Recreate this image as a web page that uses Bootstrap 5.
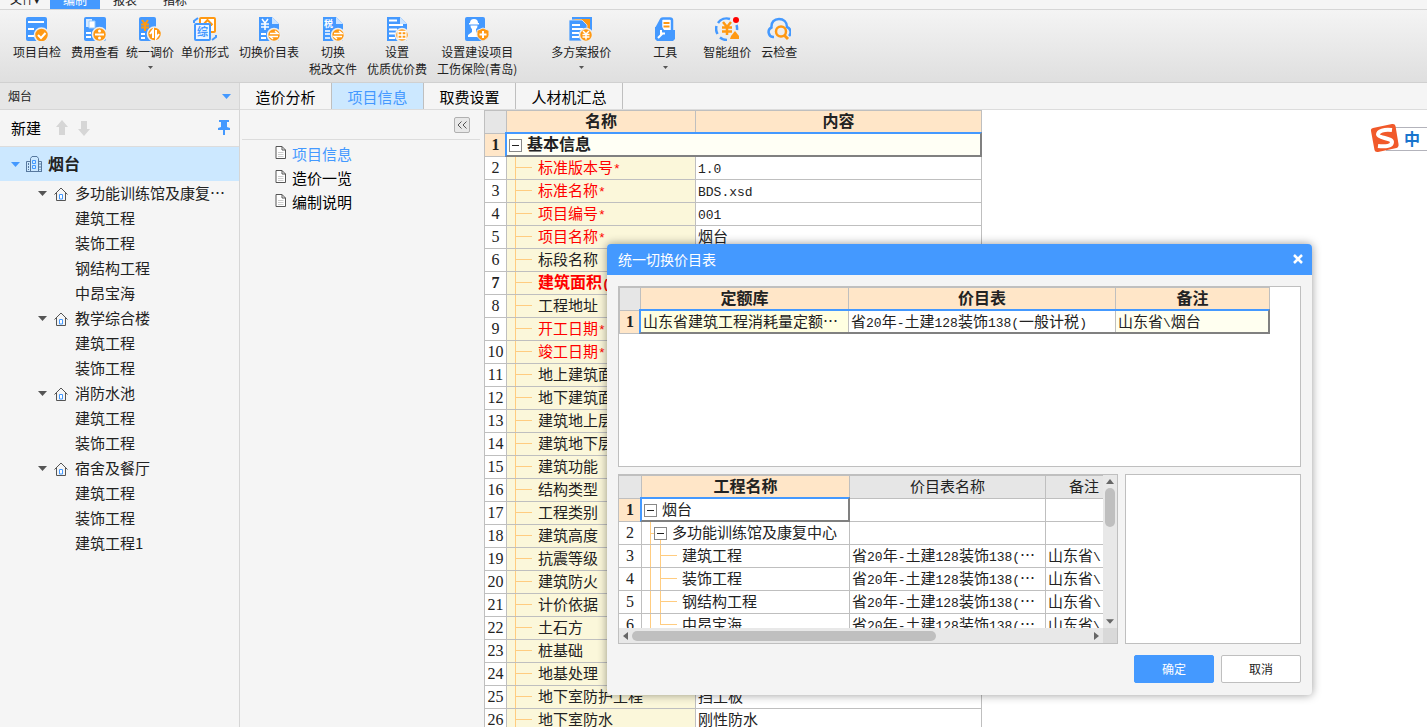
<!DOCTYPE html>
<html lang="zh-CN">
<head>
<meta charset="utf-8">
<meta name="viewport" content="width=device-width, initial-scale=1">
<title>造价编制</title>
<link href="https://cdn.jsdelivr.net/npm/bootstrap@5.3.0/dist/css/bootstrap.min.css" rel="stylesheet">
<style>
:root{--blue:#4499ff;--line:#bfbfbf;--soft:#dcdcdc;--peach:#ffe6c8;--cream:#fbf7da;--twig:#ffcc80;--orange:#ff9913}
body{font-family:"Noto Sans CJK SC",sans-serif;font-size:15px;line-height:20px;color:#222;background:#fff}
a{color:inherit;text-decoration:none}
svg{display:block;flex:none}
button{color:inherit}
.lt{font-family:"Liberation Mono",monospace;font-size:13px;line-height:1}
.menu-row{height:10px;background:#f5f5f5;border-bottom:1px solid #d6d6d6;font-size:12px;overflow:hidden}
.menu-row a{width:50px;text-align:center;line-height:18px;flex:none}
.menu-row a.active{background:var(--blue);color:#fff}
.ribbon{height:73px;padding:7px 13px 0;gap:10px;background:linear-gradient(#f4f4f4,#dfdfdf);border-bottom:1px solid #d0d0d0;font-size:12px}
.tight{gap:7px}
.tool{border:0;background:none;padding:0;line-height:17px;display:flex;flex-direction:column;align-items:center;white-space:nowrap}
.tool svg.ico{width:24px;height:24px;margin-bottom:2px}
.tool svg.dn{margin-top:6px;color:#555}
.side{width:240px;background:#f5f5f5;border-right:1px solid #d6d6d6}
.project{height:27px;background:#e6e6e6;border-bottom:1px solid #d6d6d6}
.project select{width:100%;height:26px;border:0;background:none;appearance:none;padding:0 8px;font-size:12px;color:#222}
.project svg{position:absolute;right:8px;top:11px}
.side-bar{height:37px;border-bottom:1px solid var(--soft);padding:0 9px 0 11px;gap:10px;color:#000}
.side-bar a{margin-right:5px}
.side ul,.docs ul{list-style:none;margin:0;padding:0}
.root-node{height:34px;gap:6px;background:#cce8ff;padding-left:11px;font-size:16px;font-weight:bold}
.root-node span{padding-bottom:3px}
.branch,.leafs li{height:25px;white-space:nowrap}
.branch{padding-left:38px;gap:7px}
.branch span{padding-bottom:2px}
.leafs li{padding-left:75px;line-height:23px}
.tabs{height:27px;background:#f5f5f5;border-bottom:1px solid var(--soft)}
.tabs a{width:92px;text-align:center;line-height:28px;border-right:1px solid var(--line);color:#000}
.tabs a.wide{width:107px}
.tabs a.active{background:#cce8ff;color:var(--blue)}
.docs{width:244px;background:#f5f5f5}
.docs-top{height:30px;margin:0 4px 0 2px;border-bottom:1px solid var(--soft);padding-right:10px}
.docs-top button{width:16px;height:16px;padding:0;border:1px solid #b0b0b0;border-radius:2px;background:#e8e8e8}
.docs ul{padding-top:2px}
.docs li a{height:24px;gap:6px;padding-left:35px;color:#000}
.docs li svg{margin-bottom:3px}
.docs li a.active{color:var(--blue)}
.grid{border-collapse:separate;border-spacing:0;table-layout:fixed;border-left:1px solid var(--line);border-top:1px solid var(--line)}
.grid th,.grid td{height:23px;padding:0 2px;border:0 solid var(--line);border-width:0 1px 1px 0;line-height:19px;vertical-align:top;white-space:nowrap;overflow:hidden;font-weight:normal;background-color:#fff}
.grid thead th{background-color:var(--peach);font-weight:bold;font-size:16px;text-align:center}
.grid thead th.off{background-color:#e6e6e6;font-weight:normal;font-size:15px}
.grid tbody th{text-align:center;padding:0;font-family:"Liberation Serif",serif;font-size:16px;line-height:22px}
.grid tbody th.on{background-color:var(--peach);font-weight:bold}
.info{width:498px}
.info .c1{width:22px}.info .c2{width:189px}
.lib{width:651px}
.lib .c1{width:21px}.lib .c2{width:208px}.lib .c3{width:267px}
.proj{width:504px}
.proj .c1{width:23px}.proj .c2{width:208px}.proj .c3{width:196px}
.info tbody td:nth-child(2){padding-left:31px;background-color:var(--cream);background-image:linear-gradient(var(--twig),var(--twig)),linear-gradient(var(--twig),var(--twig));background-size:1px 100%,17px 1px;background-position:8px 0,8px 10px;background-repeat:no-repeat}
.info tbody td.title{padding-left:2px;background:#fffff5;font-weight:bold;font-size:16px}
.info .need td:nth-child(2){color:#f00}
.info .strong th,.info .strong td{font-weight:bold}
.info .strong td{font-size:16px}
.lib td.pick{background-color:#ffffe1}
.lib td.note{background-color:#fffff0}
.grid td.sel{position:relative;overflow:visible}
.sel::after{content:"";position:absolute;inset:-2px -1px -1px -2px;border:2px solid #808080;border-top-color:var(--blue);border-left-color:var(--blue);pointer-events:none}
.lib .sel::after{right:-422px}
.fold{display:inline-block;vertical-align:-2px;width:13px;height:13px;margin-right:5px;border:1px solid #888;background:linear-gradient(#222,#222) center/7px 1px no-repeat #fff;line-height:13px}
.proj td.n1{padding-left:12px}
.proj td.n2{padding-left:40px}
.proj .twig{background-image:linear-gradient(var(--twig),var(--twig)),linear-gradient(var(--twig),var(--twig)),linear-gradient(var(--twig),var(--twig));background-repeat:no-repeat}
.proj td.n1{background-size:1px 100%,4px 1px,1px 6px;background-position:8px 0,8px 11px,18px 100%}
.proj td.n2{background-size:1px 100%,1px 100%,17px 1px;background-position:8px 0,18px 0,18px 10px}
.proj .last td.n2{background-size:1px 100%,1px 10px,17px 1px}
.dialog-win{position:absolute;left:607px;top:244px;width:705px;background:#f4f4f4;border-radius:4px;box-shadow:0 0 10px rgba(0,0,0,.4);overflow:hidden}
.dialog-bar{height:31px;background:var(--blue);color:#fff;padding:0 8px 1px 11px;font-size:14px}
.dialog-bar button{border:0;background:none;padding:0;width:12px;height:12px}
.dialog-main{padding:11px 11px 12px}
.pane{background:#fff;border:1px solid var(--line)}
.pane-top{height:181px}
.panes{height:170px;margin-top:7px;gap:7px}
.pane-left{width:500px;display:grid;grid-template:minmax(0,1fr) 15px/minmax(0,1fr) 14px}
.pane-left .grid{border-left:0}
.clip{overflow:hidden}
.vbar,.hbar{background:#e8e8e8}
.vbar i{width:10px;height:39px;border-radius:5px;background:#bfbfbf}
.hbar i{width:304px;height:10px;border-radius:5px;background:#bfbfbf}
.corner{background:#d9d9d9}
.actions{gap:7px;margin-top:11px}
.actions .btn{width:80px;height:28px;padding:0;font-size:12px;border-radius:2px;border:1px solid var(--line);background:#fff;color:#222}
.actions .btn.ok{background:var(--blue);border-color:var(--blue);color:#fff}
.ime{position:absolute;right:0;top:123px;width:57px;height:30px}
.ime-bar{height:24px;width:41px;border:1px solid #b3b3bb;border-right:0;background:#fff;color:#1874cd;font-weight:bold;font-size:16px;line-height:21px;padding-left:17px}
.ime svg{position:absolute;left:0;top:0}
</style>
</head>
<body class="vh-100 overflow-hidden position-relative d-flex flex-column">
<svg width="0" height="0" class="position-absolute">
<defs>
<symbol id="sheet" viewBox="0 0 24 24"><path fill="#4499ff" d="M2 0h13l7 7v17H2z"/><path fill="#cce4ff" d="M15 0l7 7h-7z"/></symbol>
<symbol id="caret" viewBox="0 0 9 5"><path d="M0 0h9L4.500 5z" fill="currentColor"/></symbol>
<symbol id="house" viewBox="0 0 14 14"><path d="M.5 7.500L7 1l6.500 6.500M2.500 6v7.500h9V6" fill="none" stroke="#555"/><path d="M5.500 7.500h3V12h-3z" fill="#fff" stroke="#4499ff"/></symbol>
<symbol id="doc" viewBox="0 0 11 13"><path d="M1 .5h6l3.500 3.500v8.500H1z" fill="#fff" stroke="#555"/><path d="M7 .5V4h3.500" fill="none" stroke="#555"/><path d="M3 6.500h5.500M3 8.500h5.500M3 10.500h5.500" stroke="#ccc"/></symbol>
</defs>
</svg>

<nav class="menu-row d-flex align-items-end flex-shrink-0">
<a href="#">文件<span class="small">▾</span></a><a href="#" class="active">编制</a><a href="#">报表</a><a href="#">指标</a>
</nav>

<div class="ribbon d-flex flex-shrink-0 align-items-start">
<button class="tool"><svg class="ico" viewBox="0 0 24 24"><rect x="1" width="21" height="24" rx="2" fill="#4499ff"/><path d="M3 5h16M3 12h6M3 19h6" stroke="#fff" stroke-width="2"/><circle cx="16.500" cy="18" r="7" fill="#ff9913" stroke="#eee" stroke-width="1.500"/><path d="M13 18l3 3 4.500-5" fill="none" stroke="#fff" stroke-width="2"/></svg>项目自检</button>
<div class="tight d-flex align-items-start">
<button class="tool"><svg class="ico" viewBox="0 0 24 24"><rect x="1" width="22" height="24" rx="2" fill="#4499ff"/><path d="M3 2h6v8H3z" fill="#d8eaff"/><path d="M6 4h6v7H6z" fill="#fff" stroke="#9cf"/><path d="M3 16h5M3 20h5" stroke="#fff" stroke-width="2"/><circle cx="16.500" cy="17.500" r="7" fill="#ff9913" stroke="#eee" stroke-width="1.500"/><path d="M12 17.500h9" stroke="#fff" stroke-width="2"/><circle cx="16.500" cy="14" r="1.500" fill="#fff"/><circle cx="16.500" cy="21" r="1.500" fill="#fff"/></svg>费用查看</button>
<button class="tool"><svg class="ico" viewBox="0 0 24 24"><rect x="1" width="17" height="24" rx="2" fill="#4499ff"/><path d="M4 3l3 4 3-4M3 7.500h8M3 10.500h8M7 7v7" fill="none" stroke="#ff9913" stroke-width="2"/><path d="M3 17h4M3 21h4" stroke="#fff" stroke-width="2"/><circle cx="16.500" cy="17" r="7" fill="#ff9913" stroke="#eee" stroke-width="1.500"/><path d="M15 21v-8l-3 4M18 13v8l3-4" fill="none" stroke="#fff" stroke-width="2"/></svg>统一调价<svg class="dn" width="5" height="3"><use href="#caret"/></svg></button>
<button class="tool"><svg class="ico" viewBox="0 0 24 24"><rect x="7" y="1" width="15" height="14" rx="1" fill="#fff" stroke="#ff9913" stroke-width="2"/><path d="M10 8l4.500-5 5 5M12 8h7" fill="none" stroke="#ff9913" stroke-width="2"/><rect x="2" y="7" width="15" height="16" rx="1" fill="#eef6ff" stroke="#4499ff" stroke-width="2"/><text x="4" y="19" font-size="11" font-weight="bold" fill="#4499ff">综</text><path d="M1 6V4l4-3M23 18v2l-4 3" fill="none" stroke="#4499ff" stroke-width="2"/></svg>单价形式</button>
</div>
<button class="tool"><svg class="ico" viewBox="0 0 24 24"><use href="#sheet"/><path d="M5 2l3 4 3-4M4 7h8M4 10h8M8 6v7" fill="none" stroke="#fff" stroke-width="1.500"/><path d="M4 17h5M4 21h5" stroke="#fff" stroke-width="2"/><circle cx="17" cy="18" r="6.500" fill="#ff9913" stroke="#eee" stroke-width="1.500"/><path d="M13 16.500h8l-3-2.500M21 19.500h-8l3 2.500" fill="none" stroke="#fff" stroke-width="1.500"/></svg>切换价目表</button>
<button class="tool"><svg class="ico" viewBox="0 0 24 24"><use href="#sheet"/><text x="3" y="10" font-size="9" font-weight="bold" fill="#fff">税</text><path d="M4 14h5M4 17h5M4 21h5" stroke="#fff" stroke-width="1.500"/><circle cx="17" cy="18" r="6.500" fill="#ff9913" stroke="#eee" stroke-width="1.500"/><path d="M13 16.500h8l-3-2.500M21 19.500h-8l3 2.500" fill="none" stroke="#fff" stroke-width="1.500"/></svg>切换<span>税改文件</span></button>
<button class="tool"><svg class="ico" viewBox="0 0 24 24"><use href="#sheet"/><path d="M4 3.500h8M4 8h14M4 12.500h8M4 16.500h6M4 21h6" stroke="#fff" stroke-width="2"/><circle cx="17" cy="18" r="6.500" fill="#ff9913" stroke="#eee" stroke-width="1.500"/><path d="M17 14v8M13 18h8M13 14.500h8v7h-8z" fill="none" stroke="#fff" stroke-width="1.300"/></svg>设置<span>优质优价费</span></button>
<button class="tool"><svg class="ico" viewBox="0 0 24 24"><rect x="0" width="20" height="24" rx="2" fill="#4499ff"/><path d="M5 6a4 4 0 018 0h1v1.500H4V6zM5.500 8.500h7a3.500 4 0 01-7 0zM7 12h4v3l4 3v2H3v-2l4-3z" fill="#fff"/><path d="M18 11l6 2.500v4c0 3-3 5.500-6 6.500-3-1-6-3.500-6-6.500v-4z" fill="#ff9913" stroke="#eee"/><path d="M18 14v7M14.500 17.500h7" stroke="#fff" stroke-width="2"/></svg>设置建设项目<span>工伤保险(青岛)</span></button>
<button class="tool ms-4"><svg class="ico" viewBox="0 0 24 24"><path fill="#4499ff" d="M3 0h20v20H3z"/><path fill="#ff9913" d="M5 2h16v15z"/><path fill="#4499ff" stroke="#eee" stroke-width=".8" d="M0 3h13l5 5v16H0z"/><path d="M3 8h8M3 12h11M3 16h7M3 20h7" stroke="#fff" stroke-width="2"/><circle cx="17" cy="18" r="6.500" fill="#ff9913" stroke="#eee" stroke-width="1.500"/><path d="M14 14l3 3 3-3M13.500 17.500h7M13.500 20h7M17 17v5.500" fill="none" stroke="#fff" stroke-width="1.500"/></svg>多方案报价<svg class="dn" width="5" height="3"><use href="#caret"/></svg></button>
<button class="tool ms-4 ps-2"><svg class="ico" viewBox="0 0 24 24"><path d="M2 11L7 2h5v10H2z" fill="#4499ff"/><rect x="8" y="1.500" width="11" height="16" rx="2" fill="#fff" stroke="#4499ff" stroke-width="2.500"/><path d="M10.500 6h6M10.500 9.500h6" stroke="#ff9913" stroke-width="2"/><path d="M2 10h7l2 3h11v9l-2 2H4l-2-2z" fill="#4499ff"/><path d="M5 21l5-5M8 13v3.500h4" fill="none" stroke="#fff" stroke-width="2"/></svg>工具<svg class="dn" width="5" height="3"><use href="#caret"/></svg></button>
<button class="tool ms-3"><svg class="ico" viewBox="0 0 24 24"><path d="M15 2A10.500 10.500 0 003 6M1.500 9a10.500 10.500 0 001 8M5 20.500a10.500 10.500 0 007 2.500M21.500 8a10.500 10.500 0 01.500 5" fill="none" stroke="#4499ff" stroke-width="2.500"/><path d="M8 5l4 5 4-5M7 10.500h10M7 14.500h10M12 10v8" fill="none" stroke="#ff9913" stroke-width="2.500"/><path d="M15 22l1-3 4-5 4 5v3z" fill="#ff9913"/><circle cx="21" cy="3" r="3" fill="red"/></svg>智能组价</button>
<button class="tool"><svg class="ico" viewBox="0 0 24 24"><path d="M7 20H6a5 5 0 01-1.500-9.500C4 5 7.500 2 12 2s8 3 8 8a5.500 5.500 0 012 9" fill="none" stroke="#4499ff" stroke-width="2.500"/><circle cx="14" cy="14.500" r="5" fill="none" stroke="#ff9913" stroke-width="2.500"/><path d="M17 18l4 4" stroke="#ff9913" stroke-width="3"/></svg>云检查</button>
</div>

<div class="d-flex flex-grow-1 overflow-hidden">
<aside class="side flex-shrink-0">
<div class="project position-relative"><select aria-label="工程"><option>烟台</option></select><svg width="9" height="5" color="#4499ff"><use href="#caret"/></svg></div>
<div class="side-bar d-flex align-items-center">
<a href="#">新建</a>
<svg width="12" height="16" viewBox="0 0 12 16"><path d="M6 0l6 7H9v8H3V7H0z" fill="#d6d6d6"/></svg>
<svg width="12" height="16" viewBox="0 0 12 16"><path d="M6 16L0 9h3V1h6v8h3z" fill="#d6d6d6"/></svg>
<svg class="ms-auto" width="12" height="19" viewBox="0 0 12 19"><path d="M1 1h10v2H9v5l3 1v2H7v5H5v-5H0V9l3-1V3H1z" fill="#4499ff"/></svg>
</div>
<ul>
<li><div class="root-node d-flex align-items-center"><svg width="9" height="5" color="#4499ff"><use href="#caret"/></svg><svg width="16" height="16" viewBox="0 0 16 16"><path d="M4.500 15V2.500L6 .5h5l1.500 2V15M.5 15V5.500h4M15.500 15V5.500h-3M0 15.500h16" fill="none" stroke="#57789e"/><path d="M6.500 4.500h3v3h-3zM6.500 9.500h3v3h-3z" fill="none" stroke="#4499ff"/><path d="M2.500 7v7M14 7v7" stroke="#57789e" stroke-dasharray="2 1"/></svg><span>烟台</span></div>
<ul>
<li><div class="branch d-flex align-items-center"><svg width="9" height="5" color="#555"><use href="#caret"/></svg><svg width="14" height="14"><use href="#house"/></svg><span>多功能训练馆及康复…</span></div>
<ul class="leafs"><li>建筑工程</li><li>装饰工程</li><li>钢结构工程</li><li>中昂宝海</li></ul></li>
<li><div class="branch d-flex align-items-center"><svg width="9" height="5" color="#555"><use href="#caret"/></svg><svg width="14" height="14"><use href="#house"/></svg><span>教学综合楼</span></div>
<ul class="leafs"><li>建筑工程</li><li>装饰工程</li></ul></li>
<li><div class="branch d-flex align-items-center"><svg width="9" height="5" color="#555"><use href="#caret"/></svg><svg width="14" height="14"><use href="#house"/></svg><span>消防水池</span></div>
<ul class="leafs"><li>建筑工程</li><li>装饰工程</li></ul></li>
<li><div class="branch d-flex align-items-center"><svg width="9" height="5" color="#555"><use href="#caret"/></svg><svg width="14" height="14"><use href="#house"/></svg><span>宿舍及餐厅</span></div>
<ul class="leafs"><li>建筑工程</li><li>装饰工程</li><li>建筑工程1</li></ul></li>
</ul></li>
</ul>
</aside>

<main class="flex-grow-1 d-flex flex-column overflow-hidden">
<nav class="tabs d-flex flex-shrink-0"><a href="#">造价分析</a><a href="#" class="active">项目信息</a><a href="#">取费设置</a><a href="#" class="wide">人材机汇总</a></nav>
<div class="d-flex flex-grow-1 overflow-hidden">
<section class="docs flex-shrink-0">
<div class="docs-top d-flex align-items-center justify-content-end"><button aria-label="收起"><svg width="14" height="14" viewBox="0 0 14 14"><path d="M6.500 3.500L3 7l3.500 3.500M11.500 3.500L8 7l3.500 3.500" fill="none" stroke="#555"/></svg></button></div>
<ul>
<li><a href="#" class="active d-flex align-items-center"><svg width="11" height="13"><use href="#doc"/></svg>项目信息</a></li>
<li><a href="#" class="d-flex align-items-center"><svg width="11" height="13"><use href="#doc"/></svg>造价一览</a></li>
<li><a href="#" class="d-flex align-items-center"><svg width="11" height="13"><use href="#doc"/></svg>编制说明</a></li>
</ul>
</section>
<section class="flex-grow-1 overflow-hidden">
<table class="grid info">
<colgroup><col class="c1"><col class="c2"><col></colgroup>
<thead><tr><th class="off"></th><th>名称</th><th>内容</th></tr></thead>
<tbody>
<tr><th class="on">1</th><td colspan="2" class="title sel"><span class="fold"></span>基本信息</td></tr>
<tr class="need"><th>2</th><td>标准版本号<span class="lt">*</span></td><td><span class="lt">1.0</span></td></tr>
<tr class="need"><th>3</th><td>标准名称<span class="lt">*</span></td><td><span class="lt">BDS.xsd</span></td></tr>
<tr class="need"><th>4</th><td>项目编号<span class="lt">*</span></td><td><span class="lt">001</span></td></tr>
<tr class="need"><th>5</th><td>项目名称<span class="lt">*</span></td><td>烟台</td></tr>
<tr><th>6</th><td>标段名称</td><td></td></tr>
<tr class="need strong"><th>7</th><td>建筑面积<span class="lt">(</span></td><td></td></tr>
<tr><th>8</th><td>工程地址</td><td></td></tr>
<tr class="need"><th>9</th><td>开工日期<span class="lt">*</span></td><td></td></tr>
<tr class="need"><th>10</th><td>竣工日期<span class="lt">*</span></td><td></td></tr>
<tr><th>11</th><td>地上建筑面积</td><td></td></tr>
<tr><th>12</th><td>地下建筑面积</td><td></td></tr>
<tr><th>13</th><td>建筑地上层数</td><td></td></tr>
<tr><th>14</th><td>建筑地下层数</td><td></td></tr>
<tr><th>15</th><td>建筑功能</td><td></td></tr>
<tr><th>16</th><td>结构类型</td><td></td></tr>
<tr><th>17</th><td>工程类别</td><td></td></tr>
<tr><th>18</th><td>建筑高度</td><td></td></tr>
<tr><th>19</th><td>抗震等级</td><td></td></tr>
<tr><th>20</th><td>建筑防火</td><td></td></tr>
<tr><th>21</th><td>计价依据</td><td></td></tr>
<tr><th>22</th><td>土石方</td><td></td></tr>
<tr><th>23</th><td>桩基础</td><td></td></tr>
<tr><th>24</th><td>地基处理</td><td></td></tr>
<tr><th>25</th><td>地下室防护工程</td><td>挡土板</td></tr>
<tr><th>26</th><td>地下室防水</td><td>刚性防水</td></tr>
</tbody>
</table>
</section>
</div>
</main>
</div>

<div class="dialog-win" role="dialog" aria-labelledby="dlg">
<div class="dialog-bar d-flex align-items-center justify-content-between"><span id="dlg">统一切换价目表</span><button aria-label="关闭"><svg width="12" height="12" viewBox="0 0 12 12"><path d="M2 2l8 8M10 2l-8 8" stroke="#fff" stroke-width="2.500"/></svg></button></div>
<div class="dialog-main">
<div class="pane pane-top">
<table class="grid lib">
<colgroup><col class="c1"><col class="c2"><col class="c3"><col></colgroup>
<thead><tr><th class="off"></th><th>定额库</th><th>价目表</th><th>备注</th></tr></thead>
<tbody><tr><th class="on">1</th><td class="pick sel">山东省建筑工程消耗量定额…</td><td>省<span class="lt">20</span>年<span class="lt">-</span>土建<span class="lt">128</span>装饰<span class="lt">138(</span>一般计税<span class="lt">)</span></td><td class="note">山东省<span class="lt">\</span>烟台</td></tr></tbody>
</table>
</div>
<div class="panes d-flex">
<div class="pane pane-left">
<div class="clip">
<table class="grid proj">
<colgroup><col class="c1"><col class="c2"><col class="c3"><col></colgroup>
<thead><tr><th class="off"></th><th>工程名称</th><th class="off">价目表名称</th><th class="off">备注</th></tr></thead>
<tbody>
<tr><th class="on">1</th><td class="sel"><span class="fold"></span>烟台</td><td></td><td></td></tr>
<tr><th>2</th><td class="twig n1"><span class="fold"></span>多功能训练馆及康复中心</td><td></td><td></td></tr>
<tr><th>3</th><td class="twig n2">建筑工程</td><td>省<span class="lt">20</span>年<span class="lt">-</span>土建<span class="lt">128</span>装饰<span class="lt">138(</span>…</td><td>山东省<span class="lt">\</span></td></tr>
<tr><th>4</th><td class="twig n2">装饰工程</td><td>省<span class="lt">20</span>年<span class="lt">-</span>土建<span class="lt">128</span>装饰<span class="lt">138(</span>…</td><td>山东省<span class="lt">\</span></td></tr>
<tr><th>5</th><td class="twig n2">钢结构工程</td><td>省<span class="lt">20</span>年<span class="lt">-</span>土建<span class="lt">128</span>装饰<span class="lt">138(</span>…</td><td>山东省<span class="lt">\</span></td></tr>
<tr class="last"><th>6</th><td class="twig n2">中昂宝海</td><td>省<span class="lt">20</span>年<span class="lt">-</span>土建<span class="lt">128</span>装饰<span class="lt">138(</span>…</td><td>山东省<span class="lt">\</span></td></tr>
</tbody>
</table>
</div>
<div class="vbar d-flex flex-column align-items-center py-1"><svg width="8" height="5" viewBox="0 0 8 5"><path d="M0 5l4-5 4 5z" fill="#666"/></svg><i class="mt-1"></i><svg class="mt-auto" width="8" height="5" color="#666"><use href="#caret"/></svg></div>
<div class="hbar d-flex align-items-center px-1"><svg width="5" height="8" viewBox="0 0 5 8"><path d="M5 0v8L0 4z" fill="#666"/></svg><i class="ms-1"></i><svg class="ms-auto" width="5" height="8" viewBox="0 0 5 8"><path d="M0 0v8l5-4z" fill="#666"/></svg></div>
<div class="corner"></div>
</div>
<div class="pane flex-grow-1"></div>
</div>
<div class="actions d-flex justify-content-end"><button class="btn ok">确定</button><button class="btn">取消</button></div>
</div>
</div>

<div class="ime"><div class="ime-bar ms-auto mt-1">中</div><svg width="30" height="30" viewBox="0 0 30 30"><path d="M3 5L22 1q3-.5 3.500 2l3 18q.5 3-2 4L8 29q-3 .5-3.500-2L1 8q-.5-2.500 2-3z" fill="#f1592a"/><path d="M22 7C14 6 8 8 8 11.500S22 15 22 19s-6 5-14 4" fill="none" stroke="#fff" stroke-width="4"/></svg></div>
<script src="https://cdn.jsdelivr.net/npm/bootstrap@5.3.0/dist/js/bootstrap.bundle.min.js"></script>
</body>
</html>
